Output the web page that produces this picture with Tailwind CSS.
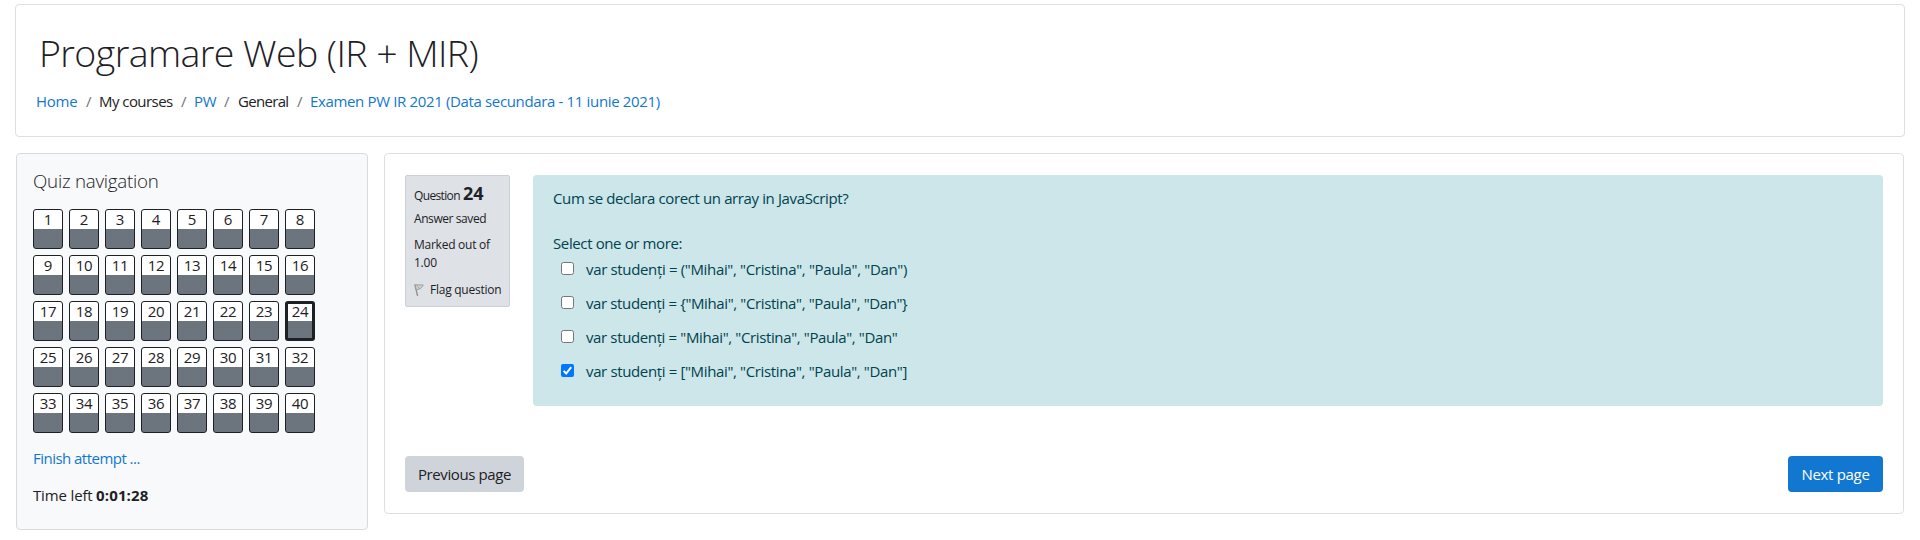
<!DOCTYPE html>
<html lang="en">
<head>
<meta charset="utf-8">
<title>Programare Web (IR + MIR)</title>
<script src="https://cdn.jsdelivr.net/npm/@tailwindcss/browser@4"></script>
</head>
<body class="bg-white h-[540px] overflow-hidden pt-1 pl-[15px] pr-[15px] font-['Open_Sans','Noto_Sans',sans-serif] text-[15px] leading-[22px] text-[#1d2125] whitespace-nowrap">
  <header class="h-[133px] border border-[#dfdfdf] rounded pt-[25px] pl-[20px]">
    <h1 class="pl-[3px] text-[37.5px] leading-[46px] font-light tracking-[-0.58px]">Programare Web (IR + MIR)</h1>
    <nav class="flex pt-[14px]">
      <a class="w-[50px] text-[#1177d1] tracking-[-0.25px]">Home</a>
      <span class="w-[13px] text-[#6c757d]">/</span>
      <span class="w-[82px] tracking-[-0.55px]">My courses</span>
      <span class="w-[13px] text-[#6c757d]">/</span>
      <a class="w-[30px] text-[#1177d1] tracking-[-0.2px]">PW</a>
      <span class="w-[14px] text-[#6c757d]">/</span>
      <span class="w-[59px] tracking-[-0.68px]">General</span>
      <span class="w-[13px] text-[#6c757d]">/</span>
      <a class="text-[#1177d1] tracking-[-0.35px]">Examen PW IR 2021 (Data secundara - 11 iunie 2021)</a>
    </nav>
  </header>

  <div class="flex items-start justify-between pt-4 pl-px pr-px">
    <aside class="w-[352px] h-[377px] border border-[#d9dadb] rounded bg-[#f8f9fa] pl-4 pt-[15px]">
      <h2 class="text-[18.75px] leading-[24px] font-light tracking-[-0.25px]">Quiz navigation</h2>
      <div id="quiz-nav" class="grid grid-cols-[repeat(8,30px)] gap-[6px] pt-4 text-center tracking-[-0.3px] leading-[18px]"></div>
      <a class="block pt-[14px] text-[#1177d1] tracking-[-0.53px]">Finish attempt ...</a>
      <div class="flex pt-[15px]"><span class="w-[63px] tracking-[-0.15px]">Time left</span><b class="font-bold tracking-[0.15px]">0:01:28</b></div>
    </aside>

    <main class="w-[1520px] h-[361px] border border-[#dfdfdf] rounded pl-5 pr-5 pt-[21px]">
      <div class="flex items-start justify-between">
        <section class="w-[105px] h-[132px] border border-[#cad0d7] rounded-[2px] bg-[#dee2e6] pl-2 text-xs leading-[18px]">
          <div class="flex items-baseline pt-[7px] h-[34px]"><span class="w-[49px] tracking-[-0.65px]">Question</span><b class="text-[18px] leading-[20px]">24</b></div>
          <div class="tracking-[-0.42px]">Answer saved</div>
          <div class="pt-2 tracking-[-0.25px]">Marked out of<br>1.00</div>
          <div class="flex pt-[9px]">
            <svg class="w-[12px] h-[14px] mt-[2px] mr-[4px]" viewBox="0 0 12 14" fill="none"><path d="M.8 1.5 3.6 12.8" stroke="#8b8b8b" stroke-width="1.3"/><path d="M1 1.8 9.3 2 6.5 5.6 2.4 6.8Z" fill="#d2d3d4" stroke="#999" stroke-width=".9"/><path d="M2.5 2.5 6 5.5" stroke="#999" stroke-width=".8"/></svg>
            <span class="tracking-[-0.25px]">Flag question</span>
          </div>
        </section>

        <section class="w-[1350px] h-[231px] rounded bg-[#cce6ea] text-[#00434e] pl-5 pt-[12px]">
          <div class="tracking-[-0.38px]">Cum se declara corect un array in JavaScript?</div>
          <div class="pt-[23px] tracking-[-0.38px]">Select one or more:</div>
          <div id="answers" class="flex flex-col gap-3 pt-1 pl-2 tracking-[-0.34px]">
            <label class="flex"><span class="w-[13px] h-[13px] mt-[4px] mr-[12px] border border-[#767676] rounded-[2.5px] bg-white"></span>var studenți = ("Mihai", "Cristina", "Paula", "Dan")</label>
            <label class="flex tracking-[-0.38px]"><span class="w-[13px] h-[13px] mt-[4px] mr-[12px] border border-[#767676] rounded-[2.5px] bg-white"></span>var studenți = {"Mihai", "Cristina", "Paula", "Dan"}</label>
            <label class="flex tracking-[-0.37px]"><span class="w-[13px] h-[13px] mt-[4px] mr-[12px] border border-[#767676] rounded-[2.5px] bg-white"></span>var studenți = "Mihai", "Cristina", "Paula", "Dan"</label>
            <label class="flex tracking-[-0.36px]"><svg class="w-[13px] h-[13px] mt-[4px] mr-[12px]" viewBox="0 0 13 13"><rect width="13" height="13" rx="2" fill="#0075ff"/><path d="M2.6 6.9 5.2 9.5 10.2 3.2" fill="none" stroke="#fff" stroke-width="2"/></svg>var studenți = ["Mihai", "Cristina", "Paula", "Dan"]</label>
          </div>
        </section>
      </div>
      <div class="flex justify-between pt-[50px]">
        <button class="w-[119px] h-9 rounded bg-[#ced4da] tracking-[-0.4px] pb-px">Previous page</button>
        <button class="w-[95px] h-9 rounded bg-[#1177d1] text-white tracking-[-0.3px] pb-px">Next page</button>
      </div>
    </main>
  </div>
<script>
  const nav = document.getElementById('quiz-nav');
  for (let n = 1; n <= 40; n++) {
    const cell = document.createElement('a');
    cell.className = n === 24
      ? 'h-10 overflow-hidden rounded-[3px] border-[3px] border-[#1d2125] bg-[linear-gradient(#fff_17px,#6c757d_17px)] bg-no-repeat leading-[14px]'
      : 'h-10 overflow-hidden rounded-[3px] border border-[#1d2125] bg-[linear-gradient(#fff_19px,#6c757d_19px)] bg-no-repeat';
    cell.textContent = n;
    nav.append(cell);
  }
</script>
</body>
</html>
